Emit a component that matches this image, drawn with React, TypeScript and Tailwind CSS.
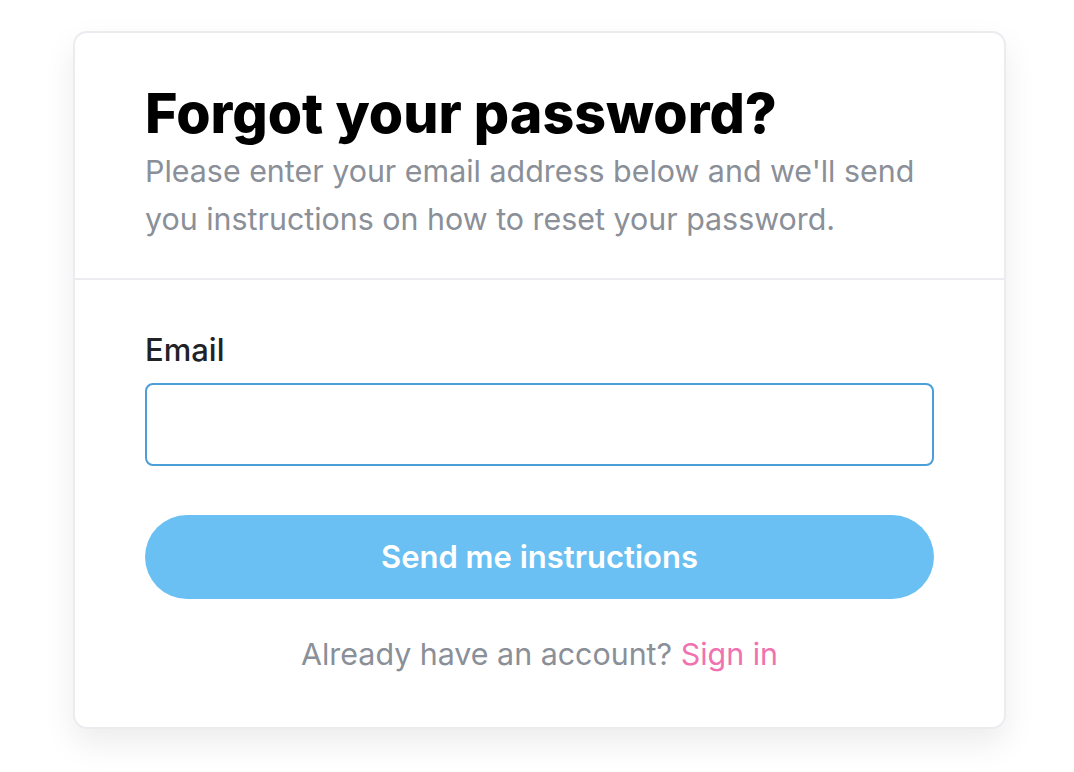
import { FC } from "react";

const App: FC = () => {
  return (
    <div className="min-h-screen bg-white pt-[31px]" style={{ fontFamily: "Inter, 'Noto Sans', sans-serif" }}>
      <div className="ml-[73px] w-[933px] rounded-[14px] border-2 border-[#ececf0] bg-white shadow-[0_14px_32px_rgba(0,0,0,0.08)]">
        {/* header */}
        <div className="border-b-2 border-[#ececf0] px-[70px] pt-[46px] pb-[35px]">
          <h1 className="text-[55.5px] font-extrabold leading-[68px] text-black">
            Forgot your password?
          </h1>
          <p className="text-[30.4px] leading-[48px] text-[#8a8f98]">
            Please enter your email address below and we'll send you instructions on how to reset your password.
          </p>
        </div>

        {/* form */}
        <div className="px-[70px] pt-[50px] pb-[52px]">
          <label className="block text-[31px] font-medium leading-[40px] text-[#1f2328]">Email</label>
          <input
            type="email"
            className="mt-[13px] block h-[83px] w-full rounded-[8px] border-2 border-[#4a9fd8] px-4 text-[28px] outline-none"
          />
          <button className="mt-[49px] h-[84px] w-full rounded-full bg-[#6ac0f2] text-[31px] font-semibold text-white">
            Send me instructions
          </button>
          <p className="mt-[34px] text-center text-[30.4px] leading-[42px] text-[#8a8f98]">
            Already have an account? <a className="text-[#f072b0]">Sign in</a>
          </p>
        </div>
      </div>
    </div>
  );
};

export default App;
